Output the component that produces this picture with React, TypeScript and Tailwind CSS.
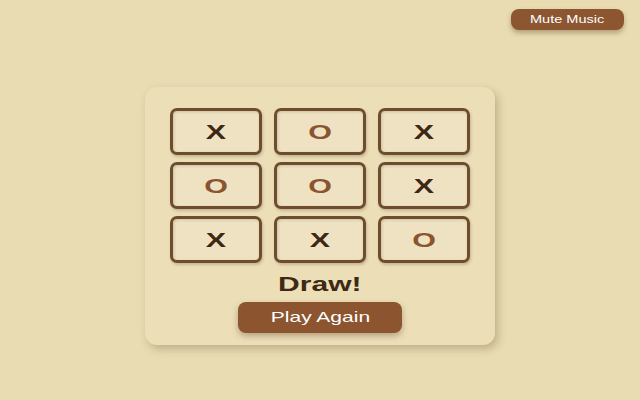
const board = ['X', 'O', 'X', 'O', 'O', 'X', 'X', 'X', 'O'];

export default function App() {
  return (
    <div className="w-[640px] h-[400px] bg-[#e9dbb2] flex flex-col font-['Liberation_Sans',Arial,sans-serif]">
      <div className="flex justify-end pt-[9px] pr-[16px]">
        <button className="w-[113px] h-[21px] rounded-[8px] bg-[#8c5630] text-white text-[11px] shadow-[0_3px_5px_rgba(80,50,20,0.35)]">
          <span className="inline-block scale-x-[1.32]">Mute Music</span>
        </button>
      </div>

      <div className="flex justify-center mt-[57px]">
        <div className="w-[350px] h-[258px] rounded-[12px] bg-[#ecdfb8] shadow-[3px_4px_8px_rgba(100,75,35,0.3)] flex flex-col items-center pt-[21px]">
          <div className="grid grid-cols-[92px_92px_92px] gap-x-[12px] gap-y-[7px]">
            {board.map((v, i) => (
              <div
                key={i}
                className="h-[47px] rounded-[7px] border-[3px] border-[#6e4c2e] bg-[#eee2c2] shadow-[inset_1px_1px_3px_rgba(90,60,30,0.2),1px_2px_3px_rgba(90,60,30,0.25)] flex items-center justify-center"
              >
                <span className={`inline-block scale-x-[1.45] text-[21px] font-bold ${v === 'X' ? 'text-[#3e2815]' : 'text-[#8a5431]'}`}>{v}</span>
              </div>
            ))}
          </div>
          <div className="mt-[6px] text-[20px] font-bold text-[#3d2914]">
            <span className="inline-block scale-x-[1.5]">Draw!</span>
          </div>
          <button className="mt-[3px] w-[164px] h-[31px] rounded-[8px] bg-[#8c5530] text-white text-[15px] shadow-[0_3px_6px_rgba(80,50,20,0.35)]">
            <span className="inline-block scale-x-[1.4]">Play Again</span>
          </button>
        </div>
      </div>
    </div>
  );
}
